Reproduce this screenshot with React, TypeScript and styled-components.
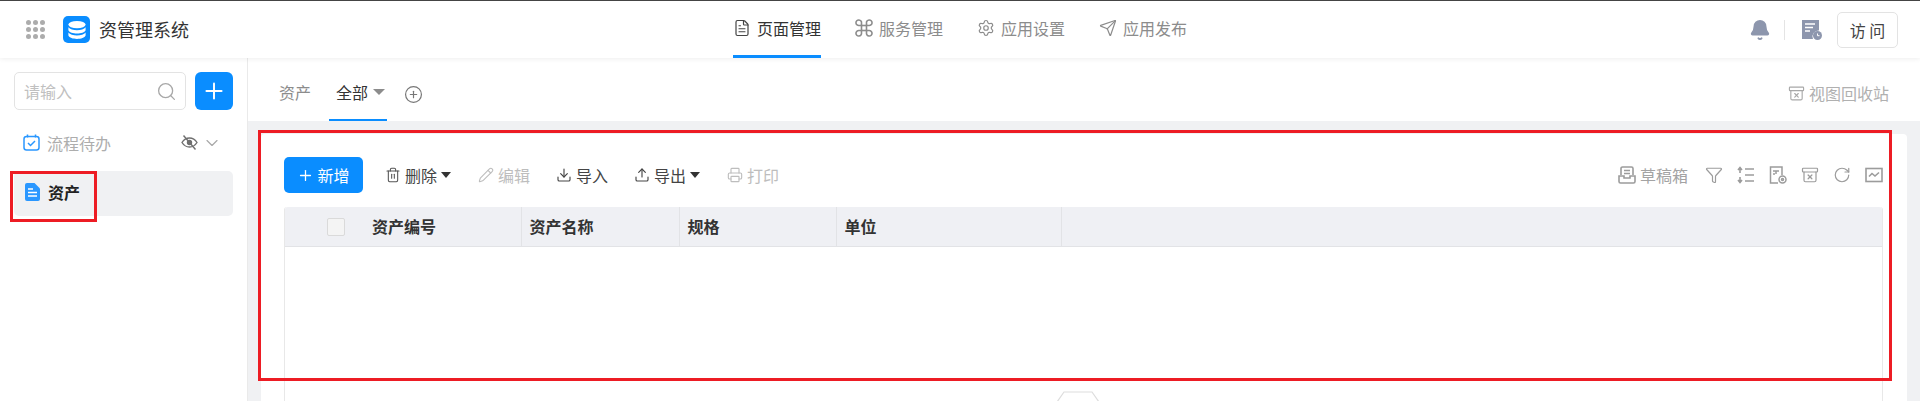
import React from "react";
import styled, { createGlobalStyle } from "styled-components";
import {
  ArchiveX, Bell, ChevronDown, CirclePlus, Download, FileText, Funnel, Pencil,
  Plus, Printer, RotateCw, Search, Send, Settings, Trash2, Upload,
} from "lucide-react";

const Global = createGlobalStyle`
  html, body { margin: 0; padding: 0; background: #fff; }
  body { font-family: "Noto Sans CJK SC", "Liberation Sans", sans-serif; font-size: 16px; color: #333; }
  * { box-sizing: border-box; }
`;

const Page = styled.div`
  width: 1920px;
  height: 401px;
  display: flex;
  flex-direction: column;
  overflow: hidden;
`;

const Header = styled.header`
  height: 58px;
  flex: none;
  border-top: 1px solid #444;
  display: grid;
  grid-template-columns: 1fr auto 1fr;
  align-items: center;
  background: #fff;
  box-shadow: 0 1px 5px rgba(0, 0, 0, 0.07);
  position: relative;
  z-index: 2;
`;

const Brand = styled.div`
  display: flex;
  align-items: center;
  padding-left: 26px;
`;

const Dots = styled.div`
  display: grid;
  grid-template-columns: repeat(3, 5px);
  grid-auto-rows: 5px;
  gap: 2px;
  margin-right: 18px;
  span { border-radius: 50%; background: #acacac; }
`;

const Logo = styled.div`
  width: 27px;
  height: 27px;
  border-radius: 5px;
  background: #0a8dff;
  display: flex;
  align-items: center;
  justify-content: center;
  margin-right: 9px;
`;

const BrandName = styled.div`
  font-size: 18px;
  line-height: 27px;
  color: #333;
`;

const Nav = styled.nav`
  display: flex;
  gap: 34px;
  height: 100%;
`;

const NavItem = styled.div<{ $active?: boolean }>`
  width: 88px;
  height: 100%;
  display: flex;
  align-items: center;
  gap: 6px;
  padding-bottom: 1px;
  white-space: nowrap;
  font-size: 16px;
  color: ${(p) => (p.$active ? "#333" : "#8c8c8c")};
  border-bottom: 3px solid ${(p) => (p.$active ? "#0a8dff" : "transparent")};
  svg { flex: none; }
`;

const HeaderRight = styled.div`
  display: flex;
  justify-content: flex-end;
  align-items: center;
  padding-right: 22px;
`;

const VDivider = styled.div`
  width: 1px;
  height: 20px;
  background: #e4e4e4;
  margin: 0 17px 0 13px;
`;

const VisitButton = styled.button`
  width: 61px;
  height: 36px;
  margin-left: 15px;
  border: 1px solid #e3e3e3;
  border-radius: 5px;
  background: #fff;
  color: #444;
  font: inherit;
  font-size: 16px;
  padding: 0;
`;

const Body = styled.div`
  flex: 1;
  min-height: 0;
  display: flex;
`;

const Sidebar = styled.aside`
  width: 248px;
  flex: none;
  border-right: 1px solid #eaeaea;
  padding: 14px 14px 0;
  position: relative;
  background: #fff;
`;

const SearchRow = styled.div`
  display: flex;
  gap: 9px;
`;

const SearchBox = styled.div`
  width: 172px;
  height: 38px;
  border: 1px solid #e3e3e3;
  border-radius: 5px;
  display: flex;
  align-items: center;
  justify-content: space-between;
  padding: 0 8px 0 9px;
  color: #c0c0c0;
  font-size: 16px;
`;

const AddButton = styled.button`
  width: 38px;
  height: 38px;
  border: 0;
  padding: 0;
  border-radius: 6px;
  background: #0a8dff;
  display: flex;
  align-items: center;
  justify-content: center;
`;

const MenuItem = styled.div<{ $selected?: boolean }>`
  height: 45px;
  margin-top: ${(p) => (p.$selected ? "5px" : "11px")};
  border-radius: 5px;
  background: ${(p) => (p.$selected ? "#f0f1f3" : "transparent")};
  display: flex;
  align-items: center;
  padding: ${(p) => (p.$selected ? "0 0 3px 11px" : "0 11px 2px 9px")};
  gap: ${(p) => (p.$selected ? "8px" : "7px")};
  font-size: 16px;
  font-weight: ${(p) => (p.$selected ? 700 : 400)};
  color: ${(p) => (p.$selected ? "#222" : "#adadad")};
`;

const MenuTrail = styled.div`
  margin-left: auto;
  display: flex;
  align-items: center;
  gap: 4px;
`;

const Annotation = styled.div<{ $top: number; $left: number; $width: number; $height: number }>`
  position: absolute;
  top: ${(p) => p.$top}px;
  left: ${(p) => p.$left}px;
  width: ${(p) => p.$width}px;
  height: ${(p) => p.$height}px;
  border: 3px solid #ed1c24;
  pointer-events: none;
  z-index: 5;
`;

const Content = styled.main`
  flex: 1;
  min-width: 0;
  display: flex;
  flex-direction: column;
  background: #f0f1f3;
`;

const TabBar = styled.div`
  height: 63px;
  flex: none;
  background: #fff;
  display: flex;
  align-items: stretch;
  padding: 0 31px 0 31px;
`;

const Tab = styled.div<{ $active?: boolean }>`
  width: ${(p) => (p.$active ? "58px" : "auto")};
  display: flex;
  align-items: center;
  padding: 7px 0 0 ${(p) => (p.$active ? "7px" : "0")};
  margin-right: ${(p) => (p.$active ? "17px" : "18px")};
  font-size: 16px;
  color: ${(p) => (p.$active ? "#333" : "#8c8c8c")};
  border-bottom: 2px solid ${(p) => (p.$active ? "#0a8dff" : "transparent")};
  white-space: nowrap;
`;

const Caret = styled.i<{ $color?: string; $gap?: number; $half?: number; $after?: number }>`
  display: inline-block;
  width: 0;
  height: 0;
  border-left: ${(p) => p.$half ?? 6}px solid transparent;
  border-right: ${(p) => p.$half ?? 6}px solid transparent;
  border-top: 6px solid ${(p) => p.$color ?? "#8c8c8c"};
  margin-left: ${(p) => p.$gap ?? 5}px;
  margin-right: ${(p) => p.$after ?? 0}px;
`;

const AddTab = styled.div`
  display: flex;
  align-items: center;
  padding-top: 9px;
`;

const Recycle = styled.div`
  margin-left: auto;
  display: flex;
  align-items: center;
  gap: 4px;
  padding-top: 7px;
  font-size: 16px;
  color: #b0b0b0;
`;

const CardWrap = styled.div`
  flex: 1;
  min-height: 0;
  padding: 13px 13px 0;
`;

const Card = styled.section`
  height: 100%;
  background: #fff;
  border-radius: 4px 4px 0 0;
  padding: 23px 24px 0 23px;
  display: flex;
  flex-direction: column;
  position: relative;
`;

const Toolbar = styled.div`
  height: 36px;
  flex: none;
  display: flex;
  align-items: center;
`;

const PrimaryButton = styled.button`
  width: 79px;
  height: 36px;
  border: 0;
  border-radius: 5px;
  background: #0a8dff;
  color: #fff;
  font: inherit;
  font-size: 16px;
  padding: 0;
  display: flex;
  align-items: center;
  justify-content: center;
  gap: 3px;
`;

const Actions = styled.div`
  display: flex;
  align-items: center;
  gap: 26px;
  margin-left: 22px;
`;

const Action = styled.div<{ $disabled?: boolean }>`
  display: flex;
  align-items: center;
  gap: 4px;
  white-space: nowrap;
  color: ${(p) => (p.$disabled ? "#bdbdbd" : "#444")};
  font-size: 16px;
`;

const ActionLabel = styled.span`
  margin-right: -4px;
  padding-right: 4px;
`;

const Tools = styled.div`
  margin-left: auto;
  display: flex;
  align-items: center;
  gap: 14px;
`;

const Draft = styled.div`
  display: flex;
  align-items: center;
  gap: 4px;
  margin-right: 3px;
  color: #a3a3a3;
  font-size: 16px;
`;

const Table = styled.div`
  flex: 1;
  min-height: 0;
  margin-top: 14px;
  display: flex;
  flex-direction: column;
  border-left: 1px solid #e8e8e8;
  border-right: 1px solid #e8e8e8;
  border-radius: 3px 3px 0 0;
`;

const HeadRow = styled.div`
  height: 40px;
  flex: none;
  background: #eff0f4;
  border-bottom: 1px solid #e2e3e6;
  display: flex;
  border-radius: 3px 3px 0 0;
`;

const HeadCell = styled.div<{ $w: number }>`
  width: ${(p) => p.$w}px;
  flex: none;
  display: flex;
  align-items: center;
  padding: 0 0 2px 7.5px;
  font-size: 16px;
  font-weight: 700;
  color: #333;
  border-right: 1px solid #e2e3e6;
`;

const CheckCell = styled.div`
  width: 237px;
  flex: none;
  display: flex;
  align-items: center;
  padding-left: 42px;
  border-right: 1px solid #e2e3e6;
  font-size: 16px;
  font-weight: 700;
  color: #333;
`;

const HeadLabel = styled.span`
  margin-bottom: 2px;
`;

const CheckBox = styled.span`
  width: 18px;
  height: 18px;
  margin-right: 27px;
  border: 1px solid #dadada;
  border-radius: 2px;
  background: #f4f4f4;
`;

const Handle = styled.svg`
  position: absolute;
  left: 795px;
  bottom: 0;
`;

const Stroke = { strokeWidth: 1.6 };

const BrandMark = () => (
  <svg width="20" height="20" viewBox="0 0 20 20" fill="#fff">
    <ellipse cx="10" cy="4.6" rx="8.6" ry="3.6" />
    <path d="M1.4 7.2c1.4 2 5 3 8.6 3s7.2-1 8.6-3v3.1c-.9 2.1-4.6 3.3-8.6 3.3s-7.7-1.2-8.6-3.3z" />
    <path d="M1.4 12.6c1.4 2 5 3 8.6 3s7.2-1 8.6-3v3c-.9 2.200-4.600 3.400-8.600 3.400s-7.700-1.200-8.600-3.400z" />
  </svg>
);

const ServiceIcon = () => (
  <svg width="18" height="18" viewBox="0 0 18 18" fill="none" stroke="#8c8c8c" strokeWidth="1.600">
    <path d="M6.500 6.500H4.300a2.800 2.800 0 1 1 2.200-2.200zM11.500 6.500V4.300a2.800 2.800 0 1 1 2.200 2.200zM6.500 11.500v2.200a2.800 2.800 0 1 1-2.200-2.200zM11.500 11.500h2.200a2.800 2.800 0 1 1-2.200 2.200z" />
    <rect x="6.500" y="6.500" width="5" height="5" />
  </svg>
);

const DocClock = () => (
  <svg width="20" height="20" viewBox="0 0 20 20">
    <path d="M0 0h17v10.500a6 6 0 0 0-6 8.500H0z" fill="#8d96ad" />
    <path d="M3 4h10M3 7.500h8M3 11h5" stroke="#fff" strokeWidth="1.500" />
    <circle cx="15.500" cy="15.500" r="4.500" fill="#8d96ad" />
    <path d="M15.500 13.500v2.200h2" stroke="#fff" strokeWidth="1" fill="none" />
  </svg>
);

const TaskIcon = () => (
  <svg width="17" height="17" viewBox="0 0 17 17" fill="none" stroke="#2a97ff" strokeWidth="1.500">
    <rect x="1" y="2.500" width="15" height="13.500" rx="2.500" />
    <path d="M4.500 0.500v3M12.500 0.500v3" />
    <path d="M5 9l2.500 2.500L12 7" />
  </svg>
);

const HiddenIcon = () => (
  <svg width="17" height="15" viewBox="0 0 17 15" fill="none" stroke="#6f6f6f" strokeWidth="1.400">
    <path d="M1 7.500C3 4.300 5.500 3 8.500 3s5.500 1.300 7.500 4.500C14 10.700 11.500 12 8.500 12S3 10.700 1 7.500z" />
    <circle cx="8.500" cy="7.500" r="2" fill="#6f6f6f" />
    <path d="M2.500 0.500l12 14" />
  </svg>
);

const PageIcon = () => (
  <svg width="15" height="18" viewBox="0 0 15 18">
    <path d="M2 0h7.500L15 5.500V16a2 2 0 0 1-2 2H2a2 2 0 0 1-2-2V2a2 2 0 0 1 2-2z" fill="#2a97ff" />
    <path d="M3 6h5M3 9.500h9M3 13h9" stroke="#fff" strokeWidth="1.500" />
  </svg>
);

const InboxIcon = () => (
  <svg width="18" height="18" viewBox="0 0 18 18" fill="none" stroke="#9c9c9c" strokeWidth="1.600">
    <path d="M3 9V2.500A1.500 1.500 0 0 1 4.500 1h9A1.500 1.500 0 0 1 15 2.500V9" />
    <path d="M1 10h5v2h6v-2h5v5.500a1.500 1.500 0 0 1-1.500 1.500h-13A1.500 1.500 0 0 1 1 15.500z" />
    <path d="M6 4.500h6M6 7.500h6" />
  </svg>
);

const RowHeightIcon = () => (
  <svg width="18" height="18" viewBox="0 0 18 18" fill="none" stroke="#9c9c9c" strokeWidth="1.600">
    <path d="M8 3h9M8 9h9M8 15h9" />
    <path d="M3 2v5M3 11v5" />
    <path d="M1 4l2-2.500L5 4M1 14l2 2.500L5 14" fill="#9c9c9c" />
  </svg>
);

const DocGearIcon = () => (
  <svg width="18" height="18" viewBox="0 0 18 18" fill="none" stroke="#9c9c9c" strokeWidth="1.500">
    <path d="M9 17H1.500V1H13v8" />
    <path d="M4 5h6M7 5v3M4 8h2" />
    <circle cx="13.500" cy="13.500" r="3.500" />
    <circle cx="13.500" cy="13.500" r="1" />
  </svg>
);

const TrendIcon = () => (
  <svg width="18" height="18" viewBox="0 0 18 18" fill="none" stroke="#9c9c9c" strokeWidth="1.600">
    <rect x="1" y="2.500" width="16" height="13" />
    <path d="M4 10.500l3-3 3 2.500 4-3.500" />
  </svg>
);

export default function App() {
  const dots = Array.from({ length: 9 });
  return (
    <Page>
      <Global />
      <Header>
        <Brand>
          <Dots>{dots.map((_, i) => <span key={i} />)}</Dots>
          <Logo><BrandMark /></Logo>
          <BrandName>资管理系统</BrandName>
        </Brand>
        <Nav>
          <NavItem $active><FileText size={18} color="#444" {...Stroke} />页面管理</NavItem>
          <NavItem><ServiceIcon />服务管理</NavItem>
          <NavItem><Settings size={18} color="#8c8c8c" {...Stroke} />应用设置</NavItem>
          <NavItem><Send size={18} color="#8c8c8c" {...Stroke} />应用发布</NavItem>
        </Nav>
        <HeaderRight>
          <Bell size={22} color="#8d96ad" fill="#8d96ad" />
          <VDivider />
          <DocClock />
          <VisitButton>访 问</VisitButton>
        </HeaderRight>
      </Header>
      <Body>
        <Sidebar>
          <SearchRow>
            <SearchBox>请输入<Search size={21} color="#a8a8a8" strokeWidth={1.500} /></SearchBox>
            <AddButton><Plus size={26} color="#fff" strokeWidth={1.800} /></AddButton>
          </SearchRow>
          <MenuItem>
            <TaskIcon />流程待办
            <MenuTrail>
              <HiddenIcon />
              <ChevronDown size={20} color="#a8a8a8" strokeWidth={1.400} />
            </MenuTrail>
          </MenuItem>
          <MenuItem $selected><PageIcon />资产</MenuItem>
          <Annotation $top={113} $left={10} $width={87} $height={51} />
        </Sidebar>
        <Content>
          <TabBar>
            <Tab>资产</Tab>
            <Tab $active>全部<Caret /></Tab>
            <AddTab><CirclePlus size={19} color="#777" strokeWidth={1.500} /></AddTab>
            <Recycle><ArchiveX size={17} color="#a8a8a8" strokeWidth={1.600} />视图回收站</Recycle>
          </TabBar>
          <CardWrap>
            <Card>
              <Annotation $top={-4} $left={-3} $width={1634} $height={251} />
              <Toolbar>
                <PrimaryButton><Plus size={17} color="#fff" strokeWidth={1.800} />新增</PrimaryButton>
                <Actions>
                  <Action><Trash2 size={16} color="#555" strokeWidth={1.600} /><ActionLabel>删除</ActionLabel><Caret $color="#333" $gap={0} $half={5.5} $after={1} /></Action>
                  <Action $disabled><Pencil size={16} color="#bdbdbd" strokeWidth={1.600} />编辑</Action>
                  <Action><Download size={16} color="#444" strokeWidth={1.700} />导入</Action>
                  <Action><Upload size={16} color="#444" strokeWidth={1.700} /><ActionLabel>导出</ActionLabel><Caret $color="#333" $gap={0} $half={5.5} $after={1} /></Action>
                  <Action $disabled><Printer size={16} color="#bdbdbd" strokeWidth={1.700} />打印</Action>
                </Actions>
                <Tools>
                  <Draft><InboxIcon />草稿箱</Draft>
                  <Funnel size={18} color="#9c9c9c" strokeWidth={1.600} />
                  <RowHeightIcon />
                  <DocGearIcon />
                  <ArchiveX size={18} color="#9c9c9c" strokeWidth={1.600} />
                  <RotateCw size={18} color="#9c9c9c" strokeWidth={1.600} />
                  <TrendIcon />
                </Tools>
              </Toolbar>
              <Table>
                <HeadRow>
                  <CheckCell><CheckBox /><HeadLabel>资产编号</HeadLabel></CheckCell>
                  <HeadCell $w={158}>资产名称</HeadCell>
                  <HeadCell $w={157}>规格</HeadCell>
                  <HeadCell $w={225}>单位</HeadCell>
                </HeadRow>
              </Table>
              <Handle width="44" height="10" viewBox="0 0 44 10" fill="none" stroke="#ddd" strokeWidth="1.200">
                <path d="M1 11L8 1h28l7 10" />
              </Handle>
            </Card>
          </CardWrap>
        </Content>
      </Body>
    </Page>
  );
}
